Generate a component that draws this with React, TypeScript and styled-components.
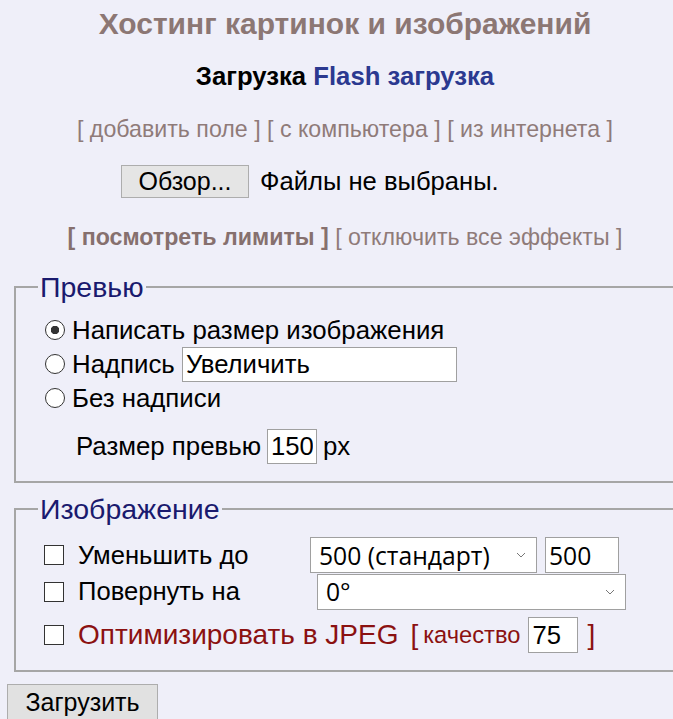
import React from "react";
import styled, { createGlobalStyle } from "styled-components";

const GlobalStyle = createGlobalStyle`
  html, body {
    margin: 0;
    padding: 0;
    overflow: hidden;
    background: #efeff9;
    font-family: "Liberation Sans", Arial, sans-serif;
    color: #000;
  }
`;

const Page = styled.div`
  width: 690px;
  display: flex;
  flex-direction: column;
`;

const Title = styled.h1`
  margin: 0;
  padding-top: 8px;
  font-size: 30px;
  line-height: 32px;
  font-weight: bold;
  text-align: center;
  color: #8c7774;
`;

const Tabs = styled.div`
  margin-top: 22px;
  text-align: center;
  font-size: 25.7px;
  line-height: 28px;
  font-weight: bold;
`;

const Tab = styled.span<{ $link?: boolean }>`
  color: ${(p) => (p.$link ? "#2b3990" : "#000")};
`;

const LinkBar = styled.div`
  margin-top: 25px;
  text-align: center;
  font-size: 23.2px;
  line-height: 28px;
  color: #8f7b79;
`;

const LinkItem = styled.span<{ $bold?: boolean }>`
  font-weight: ${(p) => (p.$bold ? "bold" : "normal")};
  color: ${(p) => (p.$bold ? "#86706e" : "#8f7b79")};
`;

const FileRow = styled.div`
  margin: 22px auto 0;
  width: 448px;
  height: 33px;
  display: flex;
  align-items: center;
  gap: 11px;
  font-size: 25.6px;
`;

const FileButton = styled.button`
  box-sizing: border-box;
  width: 128px;
  height: 33px;
  padding: 0;
  background: #e5e5e5;
  border: 1px solid #adadad;
  font-family: "Liberation Sans", Arial, sans-serif;
  font-size: 25px;
  color: #000;
`;

const Fieldset = styled.fieldset<{ $top: number; $padTop: number }>`
  margin: ${(p) => p.$top}px 0 0 14px;
  padding: ${(p) => p.$padTop}px 0 17px 22px;
  border: 2px solid #a6a6a6;
  min-width: 0;
`;

const Legend = styled.legend`
  padding: 0 2px;
  font-size: 28.5px;
  line-height: 28px;
  color: #1a1a6e;
`;

const RadioRow = styled.label`
  display: flex;
  align-items: center;
  height: 34px;
  font-size: 25.8px;
  white-space: nowrap;
`;

const Radio = styled.input.attrs({ type: "radio" })`
  appearance: none;
  box-sizing: border-box;
  width: 20px;
  height: 20px;
  margin: 0 7px 0 7px;
  border: 1px solid #333;
  border-radius: 50%;
  background: #fff;
  flex: none;
  &:checked {
    background: radial-gradient(circle, #333 0 4px, #fff 4.5px);
  }
`;

const TextInput = styled.input<{ $w: number; $h: number; $font?: string; $size?: number }>`
  box-sizing: border-box;
  width: ${(p) => p.$w}px;
  height: ${(p) => p.$h}px;
  padding: 0 3px;
  border: 1px solid #a0a0a0;
  background: #fff;
  font-family: ${(p) => p.$font || `"Liberation Sans", Arial, sans-serif`};
  font-size: ${(p) => p.$size || 25.7}px;
  color: #000;
  outline: none;
  flex: none;
`;

const SizeRow = styled.div`
  margin-top: 14px;
  padding-left: 38px;
  height: 35px;
  display: flex;
  align-items: center;
  gap: 6px;
  font-size: 25.8px;
`;

const CheckRow = styled.div<{ $top?: number; $h: number }>`
  margin-top: ${(p) => p.$top || 0}px;
  height: ${(p) => p.$h}px;
  display: flex;
  align-items: center;
  font-size: 25.6px;
`;

const Checkbox = styled.input.attrs({ type: "checkbox" })`
  appearance: none;
  box-sizing: border-box;
  width: 20px;
  height: 20px;
  margin: 0 14px 0 6px;
  border: 1px solid #333;
  background: #fff;
  flex: none;
`;

const CheckLabel = styled.span<{ $w?: number; $red?: boolean }>`
  ${(p) => (p.$w ? `width: ${p.$w}px;` : "")}
  ${(p) => (p.$red ? "font-size: 28px;" : "")}
  color: ${(p) => (p.$red ? "#8b1111" : "#000")};
  white-space: nowrap;
  flex: none;
`;

const chevron =
  "url(\"data:image/svg+xml;utf8,<svg xmlns='http://www.w3.org/2000/svg' width='10' height='6'><path d='M1 1 L5 5 L9 1' fill='none' stroke='%23777' stroke-width='1'/></svg>\")";

const Select = styled.select<{ $w: number; $ml?: number }>`
  appearance: none;
  box-sizing: border-box;
  width: ${(p) => p.$w}px;
  height: 36px;
  margin-left: ${(p) => p.$ml || 0}px;
  padding: 0 0 0 8px;
  border: 1px solid #a0a0a0;
  background: #fff ${chevron} no-repeat right 10px center;
  font-family: "Open Sans", "Noto Sans", sans-serif;
  font-size: 24.7px;
  color: #000;
  outline: none;
  flex: none;
`;

const Bracket = styled.span<{ $small?: boolean; $ml: number; $mr: number }>`
  color: #8b1111;
  font-size: ${(p) => (p.$small ? "23.7px" : "28px")};
  margin: 0 ${(p) => p.$mr}px 0 ${(p) => p.$ml}px;
  white-space: nowrap;
`;

const Gap = styled.span<{ $w: number }>`
  display: inline-block;
  width: ${(p) => p.$w}px;
  flex: none;
`;

const SubmitButton = styled.button`
  box-sizing: border-box;
  margin: 12px 0 0 7px;
  width: 151px;
  height: 36px;
  padding: 0;
  background: #e1e1e1;
  border: 1px solid #adadad;
  font-family: "Liberation Sans", Arial, sans-serif;
  font-size: 25px;
  color: #000;
  align-self: flex-start;
`;

export default function App() {
  return (
    <>
      <GlobalStyle />
      <Page>
        <Title>Хостинг картинок и изображений</Title>
        <Tabs>
          <Tab>Загрузка</Tab> <Tab $link>Flash загрузка</Tab>
        </Tabs>
        <LinkBar>
          <LinkItem>[ добавить поле ]</LinkItem> <LinkItem>[ с компьютера ]</LinkItem>{" "}
          <LinkItem>[ из интернета ]</LinkItem>
        </LinkBar>
        <FileRow>
          <FileButton>Обзор...</FileButton>
          <span>Файлы не выбраны.</span>
        </FileRow>
        <LinkBar>
          <LinkItem $bold>[ посмотреть лимиты ]</LinkItem> <LinkItem>[ отключить все эффекты ]</LinkItem>
        </LinkBar>

        <Fieldset $top={22} $padTop={12}>
          <Legend>Превью</Legend>
          <RadioRow>
            <Radio name="prev" defaultChecked />
            Написать размер изображения
          </RadioRow>
          <RadioRow>
            <Radio name="prev" />
            Надпись&nbsp;
            <TextInput $w={275} $h={35} defaultValue="Увеличить" />
          </RadioRow>
          <RadioRow>
            <Radio name="prev" />
            Без надписи
          </RadioRow>
          <SizeRow>
            <span>Размер превью</span>
            <TextInput $w={50} $h={35} defaultValue="150" />
            <span>px</span>
          </SizeRow>
        </Fieldset>

        <Fieldset $top={12} $padTop={14}>
          <Legend>Изображение</Legend>
          <CheckRow $h={36}>
            <Checkbox />
            <CheckLabel $w={232}>Уменьшить до</CheckLabel>
            <Select $w={227} defaultValue="500">
              <option value="500">500 (стандарт)</option>
            </Select>
            <Gap $w={8} />
            <TextInput
              $w={74}
              $h={36}
              $size={24.7}
              $font={`"Open Sans", "Noto Sans", sans-serif`}
              defaultValue="500"
            />
          </CheckRow>
          <CheckRow $h={37}>
            <Checkbox />
            <CheckLabel $w={232}>Повернуть на</CheckLabel>
            <Select $w={309} $ml={7} defaultValue="0">
              <option value="0">0°</option>
            </Select>
          </CheckRow>
          <CheckRow $top={7} $h={36}>
            <Checkbox />
            <CheckLabel $red>Оптимизировать в JPEG</CheckLabel>
            <Bracket $ml={12} $mr={5}>[</Bracket>
            <Bracket $small $ml={0} $mr={8}>качество</Bracket>
            <TextInput $w={50} $h={36} defaultValue="75" />
            <Bracket $ml={9} $mr={0}>]</Bracket>
          </CheckRow>
        </Fieldset>

        <SubmitButton>Загрузить</SubmitButton>
      </Page>
    </>
  );
}
